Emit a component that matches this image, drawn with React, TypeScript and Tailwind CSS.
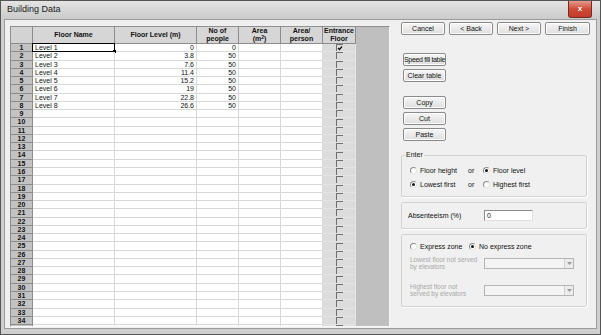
import React from 'react';

const cols = [
  { w: 82, label: ['Floor Name'] },
  { w: 82, label: ['Floor Level (m)'] },
  { w: 42, label: ['No of', 'people'] },
  { w: 42, label: ['Area', 'sup'] },
  { w: 42, label: ['Area/', 'person'] },
  { w: 33, label: ['Entrance', 'Floor'] },
];

const floors = [
  { name: 'Level 1', level: '0', people: '0' },
  { name: 'Level 2', level: '3.8', people: '50' },
  { name: 'Level 3', level: '7.6', people: '50' },
  { name: 'Level 4', level: '11.4', people: '50' },
  { name: 'Level 5', level: '15.2', people: '50' },
  { name: 'Level 6', level: '19', people: '50' },
  { name: 'Level 7', level: '22.8', people: '50' },
  { name: 'Level 8', level: '26.6', people: '50' },
];

const rows = Array.from({ length: 35 }, (_, i) => i + 1);

const Button: React.FC<{ label: string; className?: string }> = ({ label, className }) => (
  <div
    className={`flex items-center justify-center h-[13px] border border-[#8a8a8a] rounded-[2px] bg-gradient-to-b from-[#f6f6f6] to-[#dedede] text-[7px] leading-none whitespace-nowrap text-[#111] shadow-[inset_0_0_0_1px_#fdfdfd] ${className ?? ''}`}
  >
    {label}
  </div>
);

const Radio: React.FC<{ checked?: boolean; label: string; disabled?: boolean }> = ({ checked, label, disabled }) => (
  <div className="flex items-center gap-[3px]">
    <div className="w-[7px] h-[7px] rounded-full border border-[#8a8a8a] border-b-[#e6e6e6] border-r-[#e6e6e6] bg-white flex items-center justify-center">
      {checked && <div className="w-[3px] h-[3px] rounded-full bg-[#111]" />}
    </div>
    <span className={`text-[7px] leading-none ${disabled ? 'text-[#a0a0a0]' : 'text-[#111]'}`}>{label}</span>
  </div>
);

const Combo: React.FC = () => (
  <div className="w-[90px] h-[11px] border border-[#b4b4b4] bg-[#f4f4f4] flex justify-end">
    <div className="w-[9px] h-full border-l border-[#d0d0d0] bg-[#ececec] flex items-center justify-center">
      <svg width="5" height="3" viewBox="0 0 5 3">
        <path d="M0 0 H5 L2.5 3 Z" fill="#9a9a9a" />
      </svg>
    </div>
  </div>
);

const CheckBox: React.FC<{ checked?: boolean }> = ({ checked }) => (
  <div className="w-[7px] h-[7px] border-t border-l border-[#707070] bg-transparent flex items-center justify-center">
    {checked && (
      <svg width="6" height="6" viewBox="0 0 6 6">
        <path d="M1 3 L2.5 4.5 L5 1.5" stroke="#111" strokeWidth="1.2" fill="none" />
      </svg>
    )}
  </div>
);

const Grid: React.FC = () => (
  <div className="w-[380px] h-[301px] mt-[6px] ml-[5px] border border-[#8f8f8f] border-b-[#f8f8f8] border-r-[#f8f8f8] bg-[#bfbfbf] overflow-hidden">
    <div className="flex h-[17px]">
      <div className="w-[22px] h-full bg-[#d3d3d3] border-r border-b border-[#8c8c8c]" />
      {cols.map((c, i) => (
        <div
          key={i}
          style={{ width: c.w }}
          className="h-full bg-[#d6d6d6] border-r border-b border-[#8c8c8c] flex flex-col items-center justify-center text-[7px] leading-[8px] font-bold text-[#111]"
        >
          {c.label[1] === 'sup' ? (
            <>
              <span>{c.label[0]}</span>
              <span>
                (m<sup className="text-[5px]">2</sup>)
              </span>
            </>
          ) : (
            c.label.map((l) => <span key={l}>{l}</span>)
          )}
        </div>
      ))}
    </div>
    {rows.map((r) => {
      const f = floors[r - 1];
      return (
        <div key={r} className="flex h-[8.27px]">
          <div className="w-[22px] h-full bg-[#c3c3c3] border-r border-b border-[#8c8c8c] flex items-start justify-center text-[7px] leading-[8px] font-bold text-[#111]">
            {r}
          </div>
          <div className="relative w-[82px] h-full bg-white border-r border-b border-[#d8d8d8] flex items-center pl-[2px] text-[7px] leading-none text-[#111]">
            {f?.name}
            {r === 1 && (
              <>
                <div className="absolute inset-[-1px] border border-black" />
                <div className="absolute right-[-2px] bottom-[-2px] w-[3px] h-[3px] bg-black" />
              </>
            )}
          </div>
          <div className="w-[82px] h-full bg-white border-r border-b border-[#d8d8d8] flex items-center justify-end pr-[2px] text-[7px] leading-none text-[#111]">
            {f?.level}
          </div>
          <div className="w-[42px] h-full bg-white border-r border-b border-[#d8d8d8] flex items-center justify-end pr-[2px] text-[7px] leading-none text-[#111]">
            {f?.people}
          </div>
          <div className="w-[42px] h-full bg-white border-r border-b border-[#d8d8d8]" />
          <div className="w-[42px] h-full bg-white border-r border-b border-[#d8d8d8]" />
          <div className="w-[33px] h-full bg-[#dcdcdc] border-r border-b border-[#e4e4e4] flex items-center justify-center">
            <CheckBox checked={r === 1} />
          </div>
        </div>
      );
    })}
  </div>
);

const App: React.FC = () => {
  return (
    <div
      className="w-[601px] h-[335px] flex flex-col bg-[#cfcfcf] border border-[#555] px-[3px] pb-[5px] overflow-hidden"
      style={{ fontFamily: "'Liberation Sans', Arial, sans-serif" }}
    >
      <div className="h-[18px] -mx-[3px] px-[6px] flex items-start justify-between bg-gradient-to-b from-[#e4e4e4] via-[#d6d6d6] to-[#cbcbcb]">
        <span className="mt-[4px] text-[9px] leading-none text-[#1a1a1a]">Building Data</span>
        <div className="w-[24px] h-[17px] mr-[2px] rounded-b-[3px] border border-t-0 border-[#7a2a22] bg-gradient-to-b from-[#e39b8e] via-[#cf4a39] to-[#c23c2a] flex items-center justify-center">
          <span className="text-[8px] leading-none font-bold text-white">x</span>
        </div>
      </div>
      <div className="flex-1 flex bg-[#f0f0f0] border border-[#9c9c9c]">
        <Grid />
        <div className="ml-[11px] flex flex-col pt-[2px] w-[190px]">
          <div className="flex gap-[4px]">
            <Button label="Cancel" className="w-[44px]" />
            <Button label="< Back" className="w-[44px]" />
            <Button label="Next >" className="w-[44px]" />
            <Button label="Finish" className="w-[45px]" />
          </div>
          <div className="ml-[2px] mt-[18px] flex flex-col gap-[3px]">
            <Button label="Speed fill table" className="w-[43px] tracking-[-0.3px] text-[6.5px]" />
            <Button label="Clear table" className="w-[43px]" />
          </div>
          <div className="ml-[2px] mt-[14px] flex flex-col gap-[3px]">
            <Button label="Copy" className="w-[43px]" />
            <Button label="Cut" className="w-[43px]" />
            <Button label="Paste" className="w-[43px]" />
          </div>
          <div className="relative mt-[14px] w-[186px] h-[42px] border border-[#d2d2d2] rounded-[2px] shadow-[1px_1px_0_#ffffff] flex flex-col justify-center gap-[7px] pl-[8px] pt-[2px]">
            <span className="absolute left-[3px] top-[-5px] px-[1px] bg-[#f0f0f0] text-[7px] leading-none text-[#111]">Enter</span>
            <div className="flex items-center">
              <div className="w-[58px]"><Radio label="Floor height" /></div>
              <span className="w-[15px] text-[7px] leading-none text-[#111]">or</span>
              <Radio checked label="Floor level" />
            </div>
            <div className="flex items-center">
              <div className="w-[58px]"><Radio checked label="Lowest first" /></div>
              <span className="w-[15px] text-[7px] leading-none text-[#111]">or</span>
              <Radio label="Highest first" />
            </div>
          </div>
          <div className="mt-[5px] w-[186px] h-[27px] border border-[#d2d2d2] rounded-[2px] shadow-[1px_1px_0_#ffffff] flex items-center pl-[6px]">
            <span className="w-[76px] text-[7px] leading-none text-[#111]">Absenteeism (%)</span>
            <div className="w-[49px] h-[11px] border border-[#8c8c8c] border-b-[#e0e0e0] border-r-[#e0e0e0] bg-white flex items-center pl-[2px] text-[7px] leading-none text-[#111]">
              0
            </div>
          </div>
          <div className="mt-[5px] w-[186px] h-[73px] border border-[#d2d2d2] rounded-[2px] shadow-[1px_1px_0_#ffffff] flex flex-col pl-[8px] pt-[8px]">
            <div className="flex items-center">
              <div className="w-[59px]"><Radio label="Express zone" /></div>
              <Radio checked label="No express zone" />
            </div>
            <div className="flex items-center mt-[6px]">
              <div className="w-[74px] text-[6.5px] leading-[7px] text-[#a8a8a8]">
                Lowest floor not served
                <br />
                by elevators
              </div>
              <Combo />
            </div>
            <div className="flex items-center mt-[13px]">
              <div className="w-[74px] text-[6.5px] leading-[7px] text-[#a8a8a8]">
                Highest floor not
                <br />
                served by elevators
              </div>
              <Combo />
            </div>
          </div>
        </div>
      </div>
    </div>
  );
};

export default App;
